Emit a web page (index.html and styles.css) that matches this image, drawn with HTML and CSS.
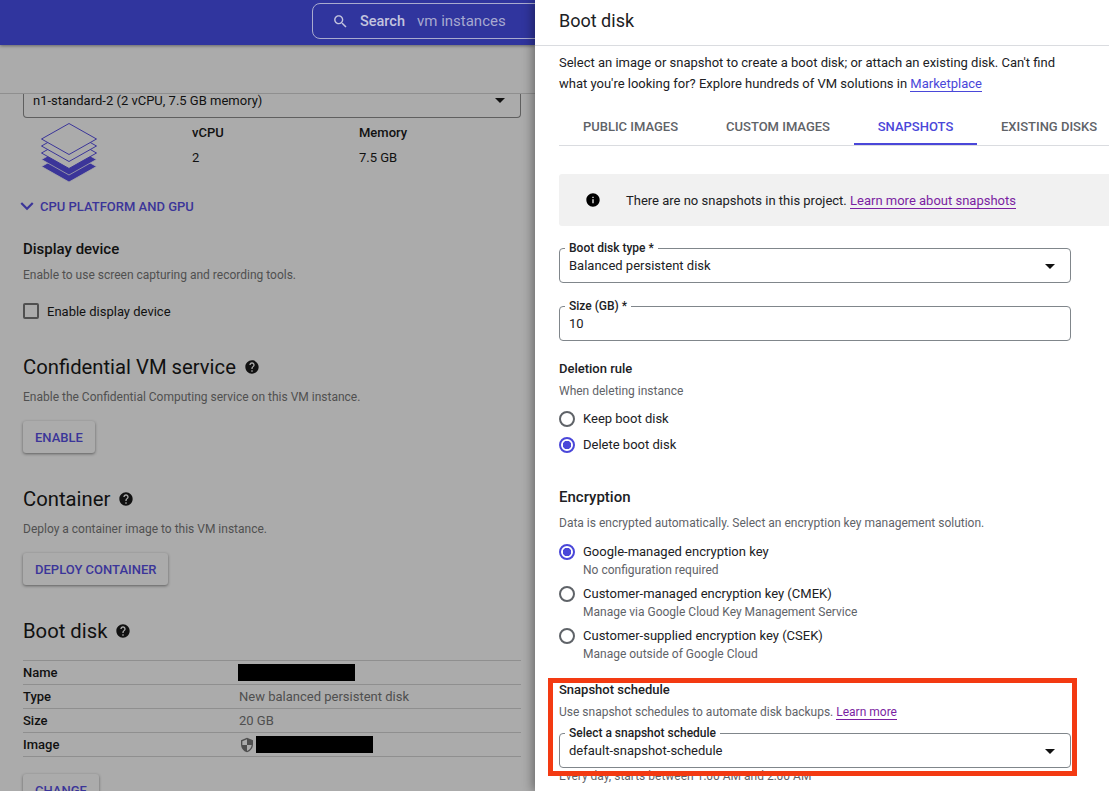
FILE: index.html
```html
<!DOCTYPE html>
<html>
<head>
	<meta charset="UTF-8">
	<title>Boot disk</title>
	<link rel="stylesheet" href="styles.css">
</head>
<body>
<div class="page">
	<div class="main">
		<div class="topbar">
			<div class="search">
				<svg class="search-icon" viewBox="0 0 24 24"><path d="M15.5 14h-.79l-.28-.27C15.41 12.59 16 11.11 16 9.5 16 5.91 13.09 3 9.5 3S3 5.91 3 9.5 5.91 16 9.5 16c1.61 0 3.09-.59 4.23-1.57l.27.28v.79l5 4.99L20.49 19l-4.99-5zm-6 0C7.01 14 5 11.99 5 9.5S7.01 5 9.5 5 14 7.01 14 9.5 11.99 14 9.5 14z"/></svg>
				<span class="search-label">Search</span>
				<span class="search-hint">vm instances</span>
			</div>
		</div>
		<div class="subbar"></div>
		<div class="form">
			<div class="machine-select">
				<span>n1-standard-2 (2 vCPU, 7.5 GB memory)</span>
				<svg class="caret" viewBox="0 0 24 24"><path d="M7 10l5 5 5-5z"/></svg>
			</div>
			<div class="machine-info">
				<svg class="stack" viewBox="0 0 56 60">
					<path class="solid" d="M28 28l27.5 15.5L28 59 .5 43.5z"/>
					<path class="solid" d="M28 21l27.5 15.5L28 52 .5 36.5z"/>
					<path class="line" d="M28 14.500l27.500 15.500L28 45.500 .5 30z"/>
					<path class="line" d="M28 7.500l27.500 15.500L28 38.500 .5 23z"/>
					<path class="line" d="M28 .5l27.500 15.500L28 31.500 .5 16z"/>
				</svg>
				<div class="spec spec-cpu"><b>vCPU</b><span>2</span></div>
				<div class="spec"><b>Memory</b><span>7.5 GB</span></div>
			</div>
			<div class="expander">
				<svg viewBox="0 0 24 24"><path d="M7.41 8.59L12 13.17l4.59-4.58L18 10l-6 6-6-6 1.41-1.41z"/></svg>
				CPU PLATFORM AND GPU
			</div>
			<h4 class="display-title">Display device</h4>
			<p class="hint display-hint">Enable to use screen capturing and recording tools.</p>
			<label class="check"><i></i>Enable display device</label>

			<h3 class="conf-title">Confidential VM service
				<svg class="help" viewBox="0 0 24 24"><path d="M12 2C6.48 2 2 6.48 2 12s4.48 10 10 10 10-4.48 10-10S17.52 2 12 2zm1 17h-2v-2h2v2zm2.07-7.75l-.9.92C13.45 12.9 13 13.5 13 15h-2v-.5c0-1.1.45-2.1 1.17-2.83l1.24-1.26c.37-.36.59-.86.59-1.41 0-1.1-.9-2-2-2s-2 .9-2 2H8c0-2.21 1.79-4 4-4s4 1.79 4 4c0 .88-.36 1.68-.93 2.25z"/></svg>
			</h3>
			<p class="hint section-hint">Enable the Confidential Computing service on this VM instance.</p>
			<button class="btn">ENABLE</button>

			<h3 class="section-title">Container
				<svg class="help" viewBox="0 0 24 24"><path d="M12 2C6.48 2 2 6.48 2 12s4.48 10 10 10 10-4.48 10-10S17.52 2 12 2zm1 17h-2v-2h2v2zm2.07-7.75l-.9.92C13.45 12.9 13 13.5 13 15h-2v-.5c0-1.1.45-2.1 1.17-2.83l1.24-1.26c.37-.36.59-.86.59-1.41 0-1.1-.9-2-2-2s-2 .9-2 2H8c0-2.21 1.79-4 4-4s4 1.79 4 4c0 .88-.36 1.68-.93 2.25z"/></svg>
			</h3>
			<p class="hint section-hint">Deploy a container image to this VM instance.</p>
			<button class="btn">DEPLOY CONTAINER</button>

			<h3 class="section-title">Boot disk
				<svg class="help" viewBox="0 0 24 24"><path d="M12 2C6.48 2 2 6.48 2 12s4.48 10 10 10 10-4.48 10-10S17.52 2 12 2zm1 17h-2v-2h2v2zm2.07-7.75l-.9.92C13.45 12.9 13 13.5 13 15h-2v-.5c0-1.1.45-2.1 1.17-2.83l1.24-1.26c.37-.36.59-.86.59-1.41 0-1.1-.9-2-2-2s-2 .9-2 2H8c0-2.21 1.79-4 4-4s4 1.79 4 4c0 .88-.36 1.68-.93 2.25z"/></svg>
			</h3>
			<div class="disk-table">
				<div class="row"><b>Name</b><span class="name-cell"><i class="redact"></i></span></div>
				<div class="row"><b>Type</b><span>New balanced persistent disk</span></div>
				<div class="row"><b>Size</b><span>20 GB</span></div>
				<div class="row"><b>Image</b><span class="image-cell">
					<svg class="shield" viewBox="0 0 24 24"><path d="M12 1L3 5v6c0 5.55 3.84 10.74 9 12 5.16-1.26 9-6.45 9-12V5l-9-4zm0 10.99h7c-.53 4.12-3.28 7.79-7 8.94V12H5V6.3l7-3.11v8.8z"/></svg><i class="redact"></i></span></div>
			</div>
			<button class="btn btn-change">CHANGE</button>
		</div>
	</div>

	<div class="panel">
		<div class="panel-head">Boot disk</div>
		<div class="panel-body">
			<p class="intro">Select an image or snapshot to create a boot disk; or attach an existing disk. Can't find what you're looking for? Explore hundreds of VM solutions in <a class="link-blue">Marketplace</a></p>
			<div class="tabs">
				<span class="tab tab-public">PUBLIC IMAGES</span>
				<span class="tab tab-custom">CUSTOM IMAGES</span>
				<span class="tab tab-active">SNAPSHOTS</span>
				<span class="tab tab-existing">EXISTING DISKS</span>
			</div>
			<div class="notice">
				<svg viewBox="0 0 24 24"><path d="M12 2C6.48 2 2 6.48 2 12s4.48 10 10 10 10-4.48 10-10S17.52 2 12 2zm1 15h-2v-6h2v6zm0-8h-2V7h2v2z"/></svg>
				<span>There are no snapshots in this project. <a class="link-purple">Learn more about snapshots</a></span>
			</div>
			<div class="field field-type">
				<label>Boot disk type *</label>
				<span>Balanced persistent disk</span>
				<svg class="caret" viewBox="0 0 24 24"><path d="M7 10l5 5 5-5z"/></svg>
			</div>
			<div class="field field-size">
				<label>Size (GB) *</label>
				<span>10</span>
			</div>
			<h4 class="deletion-title">Deletion rule</h4>
			<p class="hint-light deletion-hint">When deleting instance</p>
			<div class="radio deletion-first"><i></i><span>Keep boot disk</span></div>
			<div class="radio deletion-second"><i class="on"></i><span>Delete boot disk</span></div>
			<h4 class="enc-title">Encryption</h4>
			<p class="hint-light enc-hint">Data is encrypted automatically. Select an encryption key management solution.</p>
			<div class="radio enc-radio enc-first"><i class="on"></i><div><span>Google-managed encryption key</span><small>No configuration required</small></div></div>
			<div class="radio enc-radio"><i></i><div><span>Customer-managed encryption key (CMEK)</span><small>Manage via Google Cloud Key Management Service</small></div></div>
			<div class="radio enc-radio"><i></i><div><span>Customer-supplied encryption key (CSEK)</span><small>Manage outside of Google Cloud</small></div></div>
			<h4 class="schedule-title">Snapshot schedule</h4>
			<p class="hint-light schedule-hint">Use snapshot schedules to automate disk backups. <a class="link-purple">Learn more</a></p>
			<div class="field field-schedule">
				<label>Select a snapshot schedule</label>
				<span>default-snapshot-schedule</span>
				<svg class="caret" viewBox="0 0 24 24"><path d="M7 10l5 5 5-5z"/></svg>
			</div>
			<p class="hint-light schedule-note">Every day, starts between 1:00 AM and 2:00 AM</p>
		</div>
		<div class="highlight"></div>
	</div>
</div>
</body>
</html>
```

FILE: styles.css
```css
*{
	box-sizing:border-box;
}

body{
	margin:0;
	font-family:Roboto,"Liberation Sans",sans-serif;
	font-size:13px;
	color:#202124;
}

h3,h4,p{
	margin:0;
	font-weight:normal;
}

.page{
	display:flex;
	width:1109px;
	height:791px;
	overflow:hidden;
}

/* left side, dimmed behind the panel */
.main{
	width:535px;
	flex:none;
	height:791px;
	background:#ababab;
	color:#111;
	overflow:hidden;
}

.topbar{
	height:45px;
	background:#30359e;
	padding:3px 0 0 312px;
	box-shadow:0 1px 3px rgba(0,0,0,.4);
	position:relative;
}

.search{
	display:flex;
	align-items:center;
	width:300px;
	height:36px;
	border:1px solid #a9abcf;
	border-radius:8px;
	padding-left:19px;
	font-size:14px;
}

.search-icon{
	width:17px;
	height:17px;
	fill:#c3c4de;
	margin-right:11px;
}

.search-label{
	color:#c3c4de;
	font-size:14.5px;
	font-weight:500;
	margin-right:12px;
}

.search-hint{
	color:#a7a9d0;
	font-size:15px;
}

.subbar{
	height:49px;
	border-bottom:1px solid #8f8f8f;
}

.form{
	padding:0 14px 0 23px;
}

.machine-select{
	display:flex;
	justify-content:space-between;
	align-items:center;
	height:24px;
	border:1px solid #5f5f5f;
	border-top:0;
	border-radius:0 0 4px 4px;
	padding:0 8px 11px 9px;
	font-size:13px;
	color:#111;
}

.caret{
	width:24px;
	height:24px;
	fill:#111;
	flex:none;
}

.machine-info{
	display:flex;
	height:70px;
	padding-left:18px;
}

.stack{
	width:56px;
	height:60px;
	margin-top:5px;
	margin-right:95px;
}

.stack .solid{
	fill:#3b3599;
	stroke:#ababab;
	stroke-width:.8;
}

.stack .line{
	fill:#ababab;
	stroke:#3b3599;
	stroke-width:1;
}

.spec{
	display:flex;
	flex-direction:column;
	padding-top:8px;
	font-size:13px;
}

.spec-cpu{
	width:167px;
}

.spec b{
	font-weight:500;
	line-height:14px;
	margin-bottom:10px;
}

.expander{
	display:flex;
	align-items:center;
	height:20px;
	margin:8px 0 0 -9px;
	font-size:13px;
	font-weight:500;
	color:#3b3599;
}

.expander svg{
	width:26px;
	height:26px;
	flex:none;
	fill:#3b3599;
}

.display-title{
	font-size:15px;
	font-weight:500;
	line-height:18px;
	margin-top:24px;
}

.hint{
	font-size:12px;
	color:#505050;
	line-height:16px;
}

.display-hint{
	margin-top:9px;
}

.check{
	display:flex;
	align-items:center;
	margin-top:19px;
	height:18px;
	font-size:13px;
}

.check i{
	width:16px;
	height:16px;
	border:2px solid #505050;
	border-radius:2px;
	margin-right:8px;
}

.conf-title,.section-title{
	display:flex;
	align-items:center;
	font-size:20.25px;
	line-height:26px;
	height:26px;
}

.conf-title{
	margin-top:34px;
}

.section-title{
	margin-top:33px;
}

.help{
	width:16px;
	height:16px;
	margin-left:8px;
	fill:#111;
}

.section-hint{
	margin-top:9px;
}

.btn{
	display:block;
	height:32px;
	margin-top:16px;
	padding:0 12px;
	border:0;
	border-radius:3px;
	background:#ababab;
	box-shadow:0 1px 3px rgba(0,0,0,.45);
	font-family:inherit;
	font-size:13px;
	font-weight:500;
	color:#3b3599;
}

.disk-table{
	margin-top:16px;
	border-top:1px solid #8f8f8f;
}

.row{
	display:flex;
	align-items:center;
	height:24px;
	border-bottom:1px solid #8f8f8f;
	font-size:13px;
	color:#4f4f4f;
}

.row b{
	width:216px;
	font-weight:500;
	color:#111;
}

.redact{
	display:block;
	width:117px;
	height:17px;
	background:#000;
}

.name-cell{
	margin-left:-1px;
}

.image-cell{
	display:flex;
	align-items:center;
}

.shield{
	width:16px;
	height:16px;
	fill:#4f4f4f;
	margin-right:1px;
}

.btn-change{
	margin-top:17px;
}

/* slide-in panel */
.panel{
	width:574px;
	flex:none;
	height:791px;
	background:#fff;
	overflow:hidden;
	position:relative;
	box-shadow:-2px 0 10px rgba(0,0,0,.4);
}

.panel-head{
	height:46px;
	padding:12px 0 0 24px;
	font-size:18px;
	line-height:18px;
	border-bottom:1px solid #dadce0;
}

.panel-body{
	padding:0 38px 0 24px;
}

.intro{
	width:512px;
	margin-top:7px;
	line-height:20.5px;
	font-size:13px;
}

a{
	text-decoration:none;
}

.link-blue{
	color:#4a47d9;
	border-bottom:1px solid #4a47d9;
}

.link-purple{
	color:#7b1fa2;
	border-bottom:1px solid #7b1fa2;
}

.tabs{
	display:flex;
	width:600px;
	height:40px;
	margin-top:12px;
	border-bottom:1px solid #dadce0;
	white-space:nowrap;
}

.tab{
	height:39px;
	padding-top:13px;
	font-size:13px;
	font-weight:500;
	color:#5f6368;
	text-align:center;
}

.tab-public{
	width:143px;
}

.tab-custom{
	width:152px;
}

.tab-active{
	width:123px;
	color:#4a47d9;
	border-bottom:2px solid #4a47d9;
}

.tab-existing{
	width:120px;
	margin-left:12px;
}

.notice{
	display:flex;
	align-items:center;
	width:560px;
	height:52px;
	margin-top:28px;
	padding-left:26px;
	background:#f1f1f1;
	border-radius:3px;
}

.notice svg{
	width:16px;
	height:16px;
	margin-right:25px;
	fill:#000;
}

.field{
	display:flex;
	align-items:center;
	justify-content:space-between;
	position:relative;
	width:512px;
	height:35px;
	padding:0 8px 0 9px;
	border:1px solid #80868b;
	border-radius:4px;
	font-size:13px;
}

.field label{
	position:absolute;
	left:5px;
	top:-8px;
	padding:0 4px;
	background:#fff;
	font-size:12px;
	font-weight:500;
	line-height:14px;
}

.field-type{
	margin-top:22px;
}

.field-size{
	margin-top:23px;
}

h4{
	font-size:13px;
	font-weight:500;
	line-height:18px;
}

.deletion-title{
	margin-top:19px;
}

.hint-light{
	font-size:12px;
	line-height:16px;
	color:#5f6368;
}

.deletion-hint{
	margin-top:5px;
}

.radio{
	display:flex;
	align-items:flex-start;
	font-size:13px;
	line-height:16px;
}

.radio i{
	flex:none;
	width:16px;
	height:16px;
	margin-right:8px;
	border:2px solid #5f6368;
	border-radius:50%;
}

.radio i.on{
	border-color:#4a47d9;
	background:radial-gradient(circle,#4a47d9 0,#4a47d9 4px,transparent 4.5px);
}

.radio small{
	display:block;
	margin-top:2px;
	font-size:12px;
	color:#5f6368;
}

.deletion-first{
	margin-top:12px;
}

.deletion-second{
	margin-top:10px;
}

.enc-title{
	margin-top:35px;
	font-size:15px;
}

.enc-hint{
	margin-top:9px;
}

.enc-radio{
	margin-top:11px;
	height:31px;
}

.enc-first{
	margin-top:13px;
}

.schedule-title{
	margin-top:22px;
}

.schedule-hint{
	margin-top:5px;
}

.field-schedule{
	margin-top:13px;
}

.schedule-note{
	margin-top:0;
}

/* red annotation around the schedule block */
.highlight{
	position:absolute;
	left:13px;
	top:678px;
	width:529px;
	height:98px;
	border:5px solid #f33a12;
}
```
